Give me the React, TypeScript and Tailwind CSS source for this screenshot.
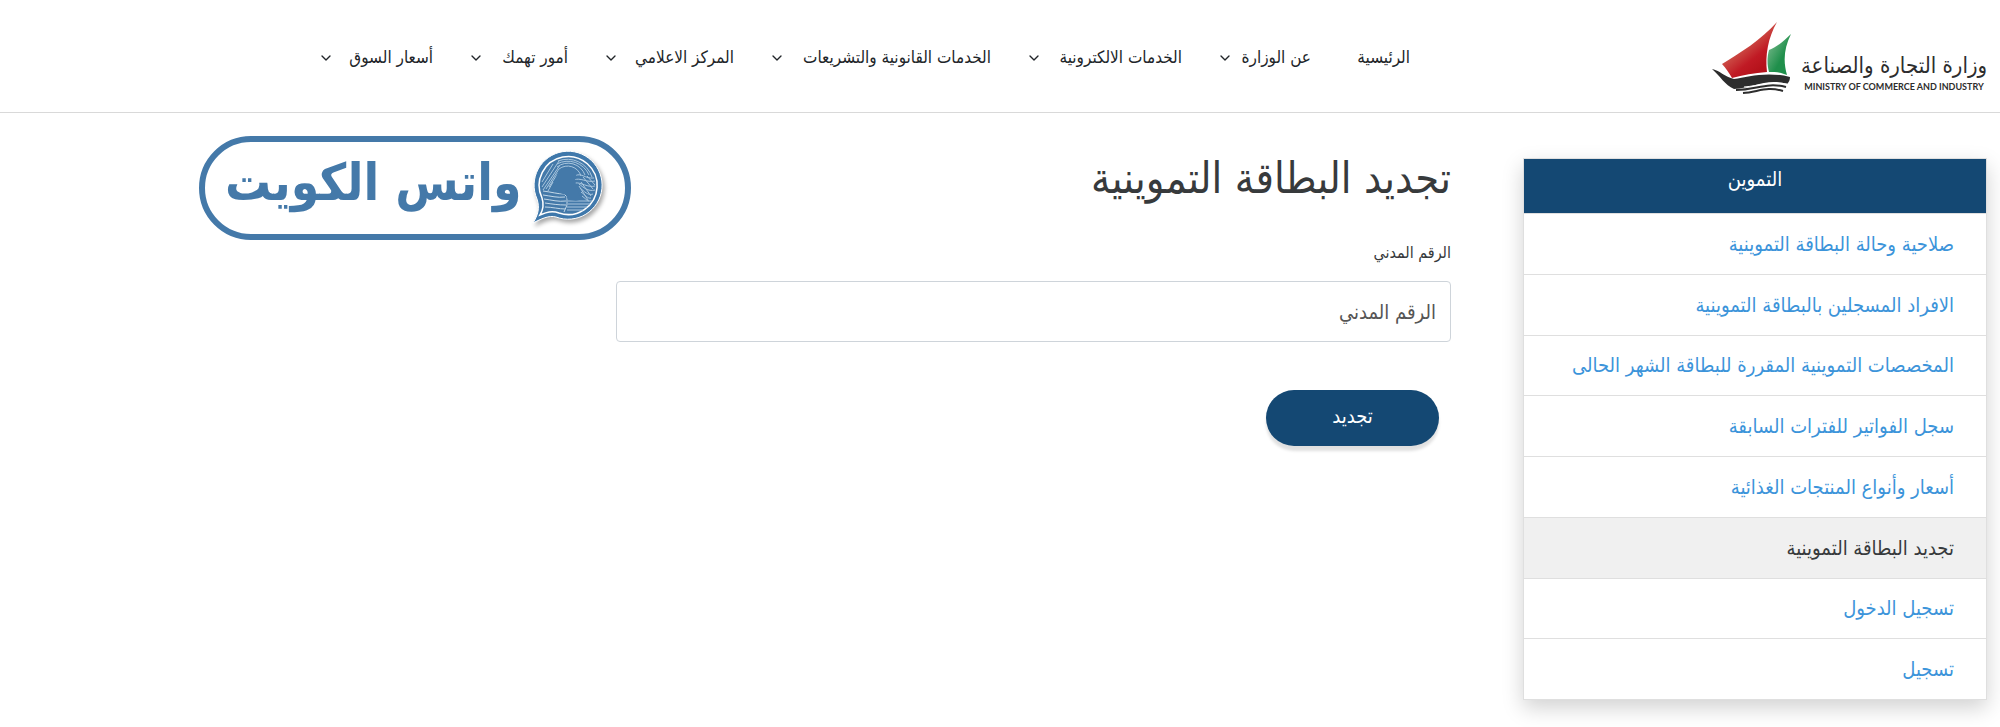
import { useState } from 'react'
import { ChevronDown } from 'lucide-react'

const navItems = [
  { label: 'الرئيسية', hasMenu: false, width: 'w-16' },
  { label: 'عن الوزارة', hasMenu: true, width: 'w-[94px]' },
  { label: 'الخدمات الالكترونية', hasMenu: true, width: 'w-[156px]' },
  { label: 'الخدمات القانونية والتشريعات', hasMenu: true, width: 'w-[222px]' },
  { label: 'المركز الاعلامي', hasMenu: true, width: 'w-[131px]' },
  { label: 'أمور تهمك', hasMenu: true, width: 'w-[100px]' },
  { label: 'أسعار السوق', hasMenu: true, width: 'w-[115px]' },
]

const sideLinks = [
  'صلاحية وحالة البطاقة التموينية',
  'الافراد المسجلين بالبطاقة التموينية',
  'المخصصات التموينية المقررة للبطاقة الشهر الحالى',
  'سجل الفواتير للفترات السابقة',
  'أسعار وأنواع المنتجات الغذائية',
  'تجديد البطاقة التموينية',
  'تسجيل الدخول',
  'تسجيل',
]

const activeLink = 'تجديد البطاقة التموينية'

function ShipLogo() {
  return (
    <svg width="80" height="74" viewBox="0 0 80 74" aria-hidden="true" className="shrink-0">
      <defs>
        <linearGradient id="redSail" x1="0.2" y1="0.1" x2="0.75" y2="0.8">
          <stop offset="0.2" stopColor="#d5735f" />
          <stop offset="0.75" stopColor="#c01a24" />
          <stop offset="1" stopColor="#b5121b" />
        </linearGradient>
        <linearGradient id="greenSail" x1="0" y1="0" x2="1" y2="1">
          <stop offset="0.15" stopColor="#6fb585" />
          <stop offset="0.6" stopColor="#1f8f4b" />
        </linearGradient>
      </defs>
      <path d="M65 1C56 17 53 34 55 51C42 52 31 54 20 57C17 52 14 47 10 43C28 32 49 19 65 1Z" fill="url(#redSail)" />
      <path d="M79 13C72 27 71 40 75 54C69 51 63 51 57 51C55 44 55 36 57 29C65 26 72 20 79 13Z" fill="url(#greenSail)" />
      <path d="M0 48C7 49 13 56 22 58C36 56 54 50 78 56C78 59 77 61 75 63C54 57 42 67 22 68C13 64 8 55 0 48Z" fill="#2d2d2d" />
      <path d="M32 66C46 65 58 60 75 63" fill="none" stroke="#fff" strokeWidth="1" />
      <path d="M24 69C44 69 54 61 74 66M31 72C46 71 55 65 71 70" fill="none" stroke="#2d2d2d" strokeWidth="2" />
    </svg>
  )
}

function ChatBadge() {
  return (
    <svg width="74" height="78" viewBox="0 0 74 78" aria-hidden="true" className="shrink-0 drop-shadow-[2px_3px_2px_rgba(0,0,0,0.35)]">
      {/* outer and inner bubble share the tail at the bottom left */}
      <path d="M6 50A34 34 0 1 1 25 68C18 66 10 70 2 74C7 66 9 59 6 50Z" fill="#3f78ab" stroke="#fff" />
      <path d="M11 49A29 29 0 1 1 28 64C20 61 14 64 9 66C12 61 13 55 11 49Z" fill="#4479a9" stroke="#fff" strokeWidth="1.500" />
      <g fill="none" stroke="#a9c6de" strokeWidth="1">
        <path d="M27 12A26 26 0 0 1 61 28M26 15A23 23 0 0 1 58 26M26 18A18 18 0 0 1 54 26M28 20A14 14 0 0 1 50 27" />
        <path d="M11 38L28 12M12 41L29 16M15 40L28 20M18 38L27 24M11 33L22 15M17 42L22 33" />
        <path d="M44 27C50 23 54 30 63 29M43 31C49 28 56 34 64 32M44 34C50 33 57 39 64 37M48 35C52 38 57 43 64 41M49 39C53 42 57 47 62 45M50 43C54 46 57 50 60 49M51 47C54 49 56 52 58 52" />
        <path d="M52 28L62 40M56 27L64 36M50 33L60 47M48 37L57 51" />
        <path d="M37 55H59M36 58H56M36 61H52M37 52H61" />
      </g>
      <g fill="none" stroke="#c3d8e8" strokeWidth="1">
        <path d="M12 42C20 43 27 45 33 45L36 48V56L33 63" />
        <path d="M12 46C20 47 26 49 34 48M13 50C21 51 27 53 35 52M14 54C21 55 27 56 35 56M14 58C21 58 28 60 34 60" />
      </g>
      <path d="M28 21C32 18 40 18 43 21C44 26 48 27 44 31C46 34 43 37 46 41L50 50C46 53 42 51 37 51L35 46C30 44 25 43 18 41C24 37 24 28 28 21Z" fill="#4479a9" />
    </svg>
  )
}

function Header() {
  return (
    <header className="flex h-[113px] items-center border-b border-[#d9d9d9] pr-3 pt-1">
      <a href="#" className="flex items-center gap-2 text-[#2d2d2d]">
        <div className="w-[188px] pt-7 text-center leading-none">
          <div className="whitespace-nowrap text-[22px] leading-6">وزارة التجارة والصناعة</div>
          <div dir="ltr" className="mt-1 whitespace-nowrap font-[Lato,sans-serif] text-[9px] font-bold">
            MINISTRY OF COMMERCE AND INDUSTRY
          </div>
        </div>
        <ShipLogo />
      </a>
      <nav className="mr-[302px] flex items-center gap-[35px] text-[17px]">
        {navItems.map((item) => (
          <a
            key={item.label}
            href="#"
            className={`flex items-center justify-between whitespace-nowrap text-[#212529] ${item.width}`}
          >
            <span>{item.label}</span>
            {item.hasMenu && <ChevronDown size={16} strokeWidth={2} className="shrink-0" />}
          </a>
        ))}
      </nav>
    </header>
  )
}

function Sidebar() {
  return (
    <aside className="w-[464px] shrink-0 border border-[#dfdfdf] bg-white shadow-[0_8px_20px_rgba(0,0,0,0.18)]">
      <h2 className="h-[54px] bg-[#144873] pt-1.5 text-center text-xl text-white">التموين</h2>
      <ul className="flex min-h-[486px] flex-col">
        {sideLinks.map((label) => (
          <li key={label} className="flex flex-1 border-t border-[#dfdfdf]">
            <a
              href="#"
              className={`flex flex-1 items-center px-8 text-xl ${
                label === activeLink ? 'bg-[#f0f0f0] text-[#373a3c]' : 'text-[#3c94da]'
              }`}
            >
              {label}
            </a>
          </li>
        ))}
      </ul>
    </aside>
  )
}

export default function App() {
  const [civilId, setCivilId] = useState('')

  return (
    <div dir="rtl" className="relative bg-white font-['DejaVu_Sans_Condensed','DejaVu_Sans',sans-serif]">
      <Header />
      <main className="flex items-start gap-[72px] pt-[45px] pr-[13px] pb-7">
        <Sidebar />
        <form className="w-[835px]" onSubmit={(e) => e.preventDefault()}>
          <h1 className="text-[43px] leading-10 text-[#373a3c]">تجديد البطاقة التموينية</h1>
          <label htmlFor="civil-id" className="mt-[43px] block text-base text-[#373a3c]">
            الرقم المدني
          </label>
          <input
            id="civil-id"
            type="text"
            value={civilId}
            onChange={(e) => setCivilId(e.target.value)}
            placeholder="الرقم المدني"
            className="mt-4 h-[61px] w-full rounded border border-[#ced4da] px-[14px] text-xl placeholder:text-[#555555]"
          />
          <button
            type="submit"
            className="mt-12 mr-3 block h-14 w-[173px] rounded-full bg-[#144873] pb-1 text-xl text-white shadow-[0_5px_3px_rgba(0,0,0,0.12)]"
          >
            تجديد
          </button>
        </form>
      </main>
      {/* WhatsApp Kuwait stamp, floats over the page */}
      <div className="absolute top-[136px] left-[199px] flex h-[104px] w-[432px] items-center justify-between rounded-full border-[6px] border-[#4479a9] px-5 text-[#4479a9]">
        <ChatBadge />
        <span className="whitespace-nowrap pb-3 text-[51px] leading-none font-bold">واتس الكويت</span>
      </div>
    </div>
  )
}
